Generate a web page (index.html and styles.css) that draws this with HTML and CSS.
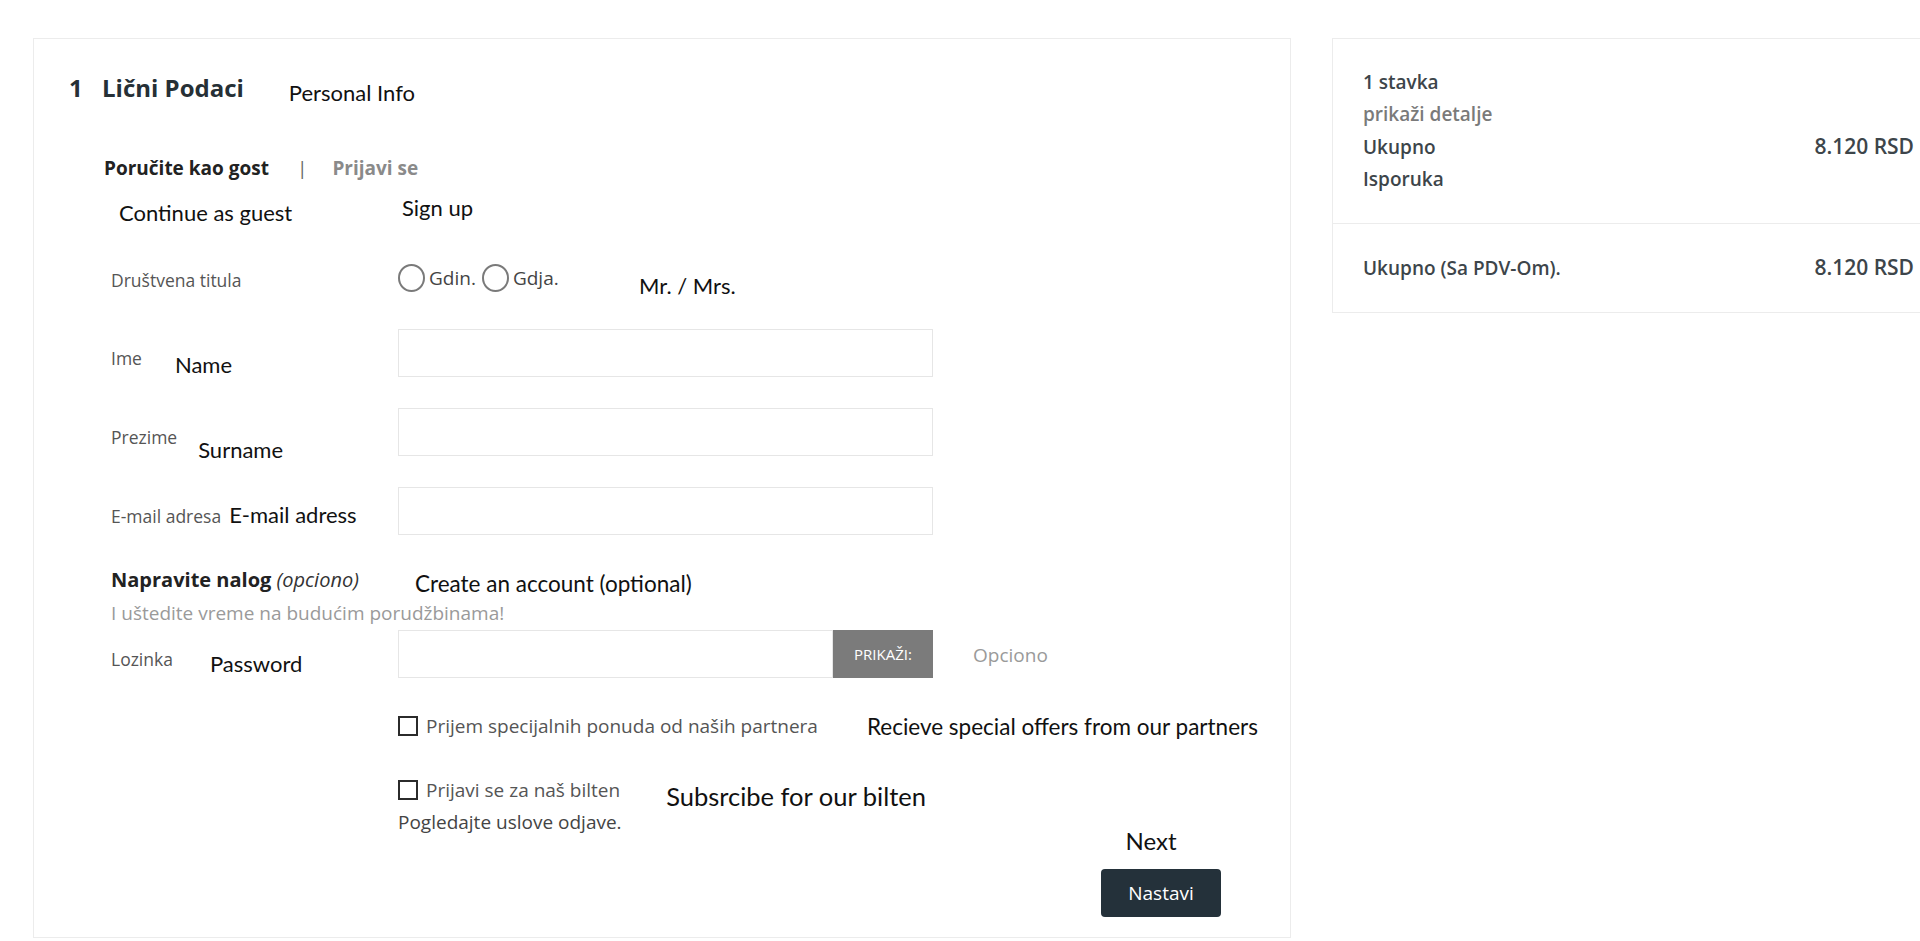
FILE: index.html
```html
<!DOCTYPE html>
<html lang="sr">
<head>
<meta charset="utf-8">
<title>Lični podaci</title>
<link rel="stylesheet" href="styles.css">
</head>
<body>
<div class="page">
  <section class="checkout-card">
    <div class="step-head">
      <h1 class="step-title"><span class="step-num">1</span>Lični Podaci</h1>
      <span class="ann ann-personal">Personal Info</span>
    </div>
    <div class="tabs">
      <span class="tab tab-active">Poručite kao gost</span>
      <span class="tab-sep">|</span>
      <span class="tab tab-muted">Prijavi se</span>
    </div>
    <div class="tab-notes">
      <span class="ann ann-guest">Continue as guest</span>
      <span class="ann ann-signup">Sign up</span>
    </div>
    <form class="form">
      <div class="row row-social">
        <div class="row-label"><span class="label">Društvena titula</span></div>
        <div class="radios">
          <label class="radio"><span class="radio-dot"></span>Gdin.</label>
          <label class="radio"><span class="radio-dot"></span>Gdja.</label>
        </div>
        <span class="ann ann-mr">Mr. / Mrs.</span>
      </div>
      <div class="row row-input row-first">
        <div class="row-label"><span class="label">Ime</span><span class="ann ann-name">Name</span></div>
        <input class="field" type="text">
      </div>
      <div class="row row-input">
        <div class="row-label"><span class="label">Prezime</span><span class="ann ann-surname">Surname</span></div>
        <input class="field" type="text">
      </div>
      <div class="row row-input">
        <div class="row-label"><span class="label">E-mail adresa</span><span class="ann ann-email">E-mail adress</span></div>
        <input class="field" type="text">
      </div>
      <div class="account-head">
        <div class="account-title"><b>Napravite nalog</b> <i>(opciono)</i></div>
        <span class="ann ann-account">Create an account (optional)</span>
      </div>
      <div class="account-sub">I uštedite vreme na budućim porudžbinama!</div>
      <div class="row row-input row-pw">
        <div class="row-label"><span class="label">Lozinka</span><span class="ann ann-password">Password</span></div>
        <div class="pw-group">
          <input class="field field-pw" type="password">
          <button type="button" class="pw-btn">PRIKAŽI:</button>
        </div>
        <span class="optional">Opciono</span>
      </div>
      <div class="check-row check-first">
        <label class="check"><span class="check-box"></span>Prijem specijalnih ponuda od naših partnera</label>
        <span class="ann ann-offers">Recieve special offers from our partners</span>
      </div>
      <div class="check-row check-second">
        <label class="check"><span class="check-box"></span>Prijavi se za naš bilten</label>
        <span class="ann ann-bilten">Subsrcibe for our bilten</span>
      </div>
      <div class="unsubscribe">Pogledajte uslove odjave.</div>
      <div class="footer">
        <span class="ann ann-next">Next</span>
        <button type="button" class="next-btn">Nastavi</button>
      </div>
    </form>
  </section>

  <aside class="summary-card">
    <div class="summary-top">
      <div class="sum-line">1 stavka</div>
      <div class="sum-line sum-muted">prikaži detalje</div>
      <div class="sum-line sum-split"><span>Ukupno</span><span class="sum-amount">8.120 RSD</span></div>
      <div class="sum-line">Isporuka</div>
    </div>
    <div class="summary-bottom">
      <div class="sum-line sum-split"><span>Ukupno (Sa PDV-Om).</span><span class="sum-amount">8.120 RSD</span></div>
    </div>
  </aside>
</div>
</body>
</html>
```
FILE: styles.css
```css
* { box-sizing: border-box; }

html, body {
  margin: 0;
  padding: 0;
  background: #ffffff;
}

body {
  width: 1920px;
  height: 941px;
  overflow: hidden;
  font-family: "Open Sans", "Noto Sans", sans-serif;
  color: #333;
}

.page {
  display: flex;
  align-items: flex-start;
  gap: 41px;
  padding: 38px 0 0 33px;
}

/* ---------- left card ---------- */
.checkout-card {
  flex: 0 0 1258px;
  width: 1258px;
  border: 1px solid #ececec;
  padding: 35px 0 20px 35px;
}

.ann {
  font-family: Lato, "Open Sans", sans-serif;
  font-size: 22px;
  line-height: 26px;
  color: #111;
  white-space: nowrap;
}

.step-head {
  display: flex;
  align-items: flex-start;
}

.step-title {
  margin: 0;
  font-size: 24px;
  line-height: 28px;
  font-weight: 700;
  color: #263036;
  display: flex;
}

.step-num {
  width: 33px;
}

.ann-personal {
  margin-left: 45px;
  margin-top: 6px;
}

.tabs {
  margin: 50px 0 0 35px;
  display: flex;
  align-items: center;
  font-size: 19px;
  line-height: 24px;
  font-weight: 700;
}

.tab-active { color: #222; }
.tab-muted { color: #8a8a8a; }

.tab-sep {
  font-weight: 400;
  color: #666;
  margin: 0 25px 0 28px;
}

.tab-notes {
  display: flex;
  align-items: flex-start;
  margin: 15px 0 0 50px;
}

.ann-guest {
  width: 283px;
  margin-top: 5px;
}

/* ---------- form ---------- */
.form {
  margin: 0 0 0 42px;
}

.row {
  display: flex;
  align-items: flex-start;
}

.row-label {
  width: 287px;
  flex: 0 0 287px;
  display: flex;
  align-items: flex-start;
}

.label {
  font-size: 17.5px;
  line-height: 20px;
  color: #555;
  padding-top: 19px;
  flex: none;
}

.row-social {
  margin-top: 40px;
}

.row-social .label {
  padding-top: 4px;
}

.radios {
  width: 241px;
  display: flex;
  align-items: center;
  gap: 6px;
  height: 24px;
}

.radio {
  display: flex;
  align-items: center;
  gap: 4px;
  font-size: 19px;
  color: #444;
}

.radio-dot {
  width: 27px;
  height: 28px;
  border: 2px solid #7a7a7a;
  border-radius: 50%;
  display: inline-block;
}

.ann-mr {
  margin-top: 7px;
}

.row-input {
  margin-top: 31px;
  height: 48px;
}

.row-first {
  margin-top: 30px;
}

.field {
  width: 535px;
  height: 48px;
  border: 1px solid #e6e6e6;
  border-radius: 0;
  padding: 0 12px;
  font: inherit;
  background: #fff;
  outline: none;
}

.ann-name { margin: 23px 0 0 33px; }
.ann-surname { margin: 29px 0 0 21px; }
.ann-email { margin: 15px 0 0 8px; }
.ann-password { margin: 21px 0 0 37px; }

.account-head {
  display: flex;
  align-items: flex-start;
  margin-top: 32px;
}

.account-title {
  width: 304px;
  font-size: 20px;
  line-height: 26px;
  color: #222;
  white-space: nowrap;
}

.account-title b { font-weight: 700; }
.account-title i { font-weight: 400; color: #333; }

.ann-account {
  margin-top: 4px;
  font-size: 22.5px;
}

.account-sub {
  margin-top: 5px;
  font-size: 19px;
  line-height: 22px;
  color: #9a9a9a;
}

.row-pw {
  margin-top: 6px;
}

.pw-group {
  display: flex;
  width: 535px;
  flex: 0 0 535px;
}

.field-pw {
  width: 435px;
  flex: 0 0 435px;
}

.pw-btn {
  width: 100px;
  height: 48px;
  border: 0;
  background: #7b7b7b;
  color: #fff;
  font-family: "Open Sans", sans-serif;
  font-size: 15px;
  padding: 0;
}

.optional {
  margin: 12px 0 0 40px;
  font-size: 19px;
  line-height: 26px;
  color: #9a9a9a;
}

.check-row {
  display: flex;
  align-items: flex-start;
  padding-left: 287px;
}

.check-first { margin-top: 36px; }
.check-second { margin-top: 38px; }

.check {
  display: flex;
  align-items: center;
  gap: 8px;
  font-size: 19px;
  line-height: 24px;
  color: #555;
  white-space: nowrap;
}

.check-box {
  width: 20px;
  height: 20px;
  border: 2px solid #2b2b2b;
  display: inline-block;
  flex: none;
}

.ann-offers { margin-left: 49px; font-size: 22.5px; }
.ann-bilten {
  margin: 3px 0 0 46px;
  font-size: 25.5px;
  line-height: 30px;
}

.unsubscribe {
  padding-left: 287px;
  font-size: 19px;
  line-height: 22px;
  color: #444;
}

.footer {
  display: flex;
  flex-direction: column;
  align-items: center;
  width: 120px;
  margin: -6px 69px 0 auto;
}

.ann-next {
  margin-right: 20px;
  font-size: 24px;
  line-height: 28px;
}

.next-btn {
  margin-top: 14px;
  width: 120px;
  height: 48px;
  border: 0;
  border-radius: 4px;
  background: #24313a;
  color: #fff;
  font-family: "Open Sans", sans-serif;
  font-size: 19px;
  padding: 0;
}

/* ---------- summary ---------- */
.summary-card {
  flex: 0 0 611px;
  width: 611px;
  border: 1px solid #ececec;
}

.summary-top {
  padding: 27px 28px 28px 30px;
  border-bottom: 1px solid #ececec;
}

.summary-bottom {
  padding: 27px 28px 28px 30px;
}

.sum-line {
  font-size: 19px;
  line-height: 32px;
  font-weight: 600;
  color: #3d454a;
}

.sum-amount {
  font-size: 21px;
}

.sum-muted {
  color: #7a7a7a;
}

.sum-split {
  display: flex;
  justify-content: space-between;
  align-items: baseline;
}
```
